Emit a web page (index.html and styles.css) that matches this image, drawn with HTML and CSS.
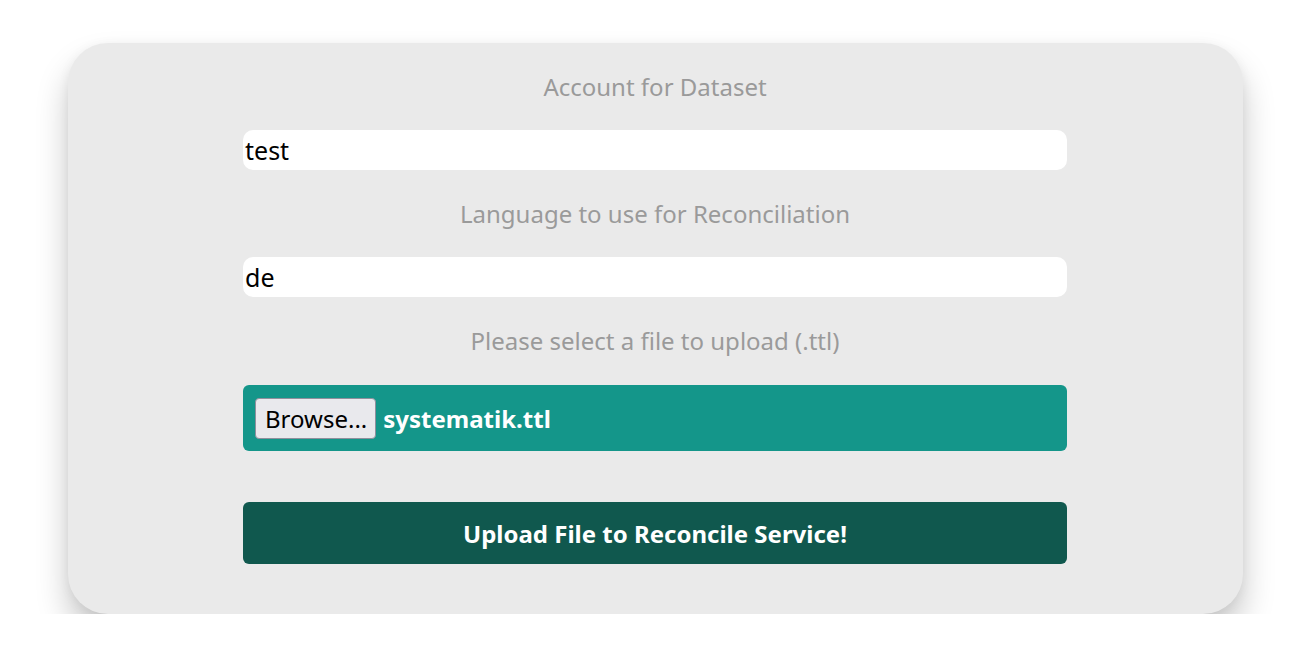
FILE: index.html
```html
<!DOCTYPE html>
<html lang="en">
<head>
<meta charset="utf-8">
<title>Upload</title>
<link rel="stylesheet" href="styles.css">
</head>
<body>
<div class="card">
  <form class="form">
    <div class="label">Account for Dataset</div>
    <div class="field">test</div>
    <div class="label">Language to use for Reconciliation</div>
    <div class="field">de</div>
    <div class="label label-file">Please select a file to upload (.ttl)</div>
    <div class="filebox">
      <span class="browse">Browse...</span>
      <span class="filename">systematik.ttl</span>
    </div>
    <div class="submit">Upload File to Reconcile Service!</div>
  </form>
</div>
</body>
</html>
```

FILE: styles.css
```css
html, body {
  margin: 0;
  padding: 0;
  background: #ffffff;
}
body {
  font-family: "Noto Sans", "DejaVu Sans", sans-serif;
  padding-top: 43px;
}
.card {
  margin-left: 68px;
  width: 1175px;
  height: 571px;
  box-sizing: border-box;
  padding-top: 27px;
  background: #eaeaea;
  border-radius: 40px;
  box-shadow: 0 20px 32px rgba(0, 0, 0, 0.22), 0 2px 12px rgba(0, 0, 0, 0.05);
}
.form {
  width: 824px;
  margin-left: 175px;
  display: flex;
  flex-direction: column;
}
.label {
  height: 34px;
  line-height: 34px;
  text-align: center;
  color: #9a9a9a;
  font-size: 24px;
  margin-bottom: 26px;
}
.label-file {
  margin-bottom: 27px;
}
.field {
  height: 40px;
  line-height: 40px;
  background: #ffffff;
  border-radius: 10px;
  padding-left: 2px;
  font-size: 25px;
  color: #000;
  margin-bottom: 27px;
}
.filebox {
  height: 66px;
  background: #14968a;
  border-radius: 6px;
  display: flex;
  align-items: center;
  gap: 7px;
  padding-left: 12px;
  margin-bottom: 51px;
}
.browse {
  height: 41px;
  box-sizing: border-box;
  display: flex;
  align-items: center;
  padding: 0 8px 0 9px;
  background: #e9e9ed;
  border: 1px solid #8f8f9d;
  border-radius: 4px;
  font-size: 24px;
  color: #000;
}
.filename {
  color: #ffffff;
  font-weight: bold;
  font-size: 24px;
}
.submit {
  height: 62px;
  background: #10584e;
  border-radius: 6px;
  display: flex;
  align-items: center;
  justify-content: center;
  color: #ffffff;
  font-weight: bold;
  font-size: 24px;
}
```
